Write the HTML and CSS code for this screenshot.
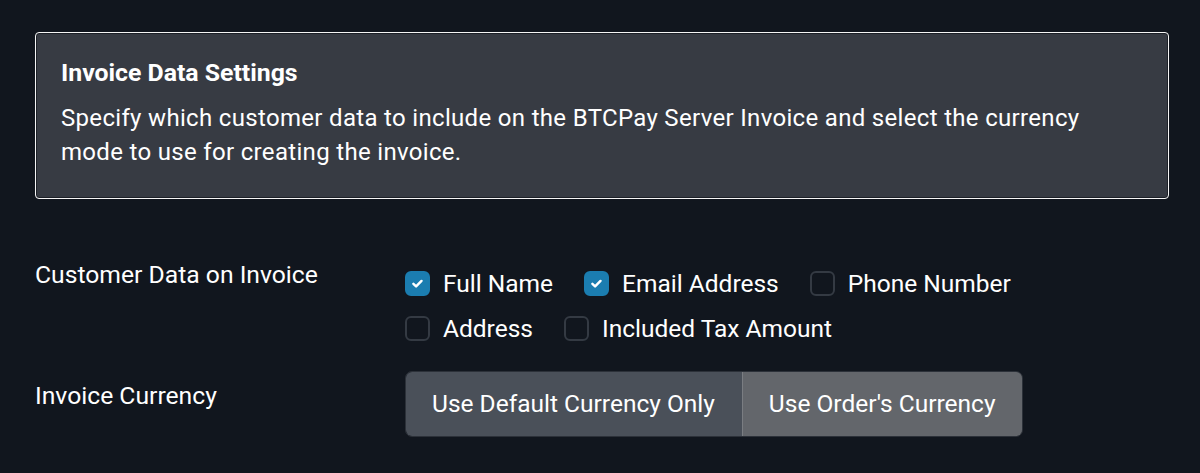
FILE: index.html
```html
<!DOCTYPE html>
<html>
<head>
<meta charset="utf-8">
<link rel="stylesheet" href="styles.css">
</head>
<body>
<div class="page">
  <div class="info-box">
    <div class="info-title">Invoice Data Settings</div>
    <div class="info-text">Specify which customer data to include on the BTCPay Server Invoice and select the currency mode to use for creating the invoice.</div>
  </div>

  <div class="form-row row-data">
    <div class="label">Customer Data on Invoice</div>
    <div class="checks">
      <label class="check"><span class="box checked"><svg viewBox="0 0 24 24" width="24" height="24"><path d="M7.3 12.4l3.1 3 6.2-6.3" fill="none" stroke="#fff" stroke-width="2.8" stroke-linecap="round" stroke-linejoin="round"/></svg></span>Full Name</label>
      <label class="check"><span class="box checked"><svg viewBox="0 0 24 24" width="24" height="24"><path d="M7.3 12.4l3.1 3 6.2-6.3" fill="none" stroke="#fff" stroke-width="2.8" stroke-linecap="round" stroke-linejoin="round"/></svg></span>Email Address</label>
      <label class="check"><span class="box"></span>Phone Number</label>
      <label class="check"><span class="box"></span>Address</label>
      <label class="check"><span class="box"></span>Included Tax Amount</label>
    </div>
  </div>

  <div class="form-row row-currency">
    <div class="label">Invoice Currency</div>
    <div class="btn-group">
      <span class="btn btn-default">Use Default Currency Only</span>
      <span class="btn btn-order">Use Order's Currency</span>
    </div>
  </div>
</div>
</body>
</html>
```

FILE: styles.css
```css
html, body {
  margin: 0;
  padding: 0;
  background: #11161e;
}
body {
  font-family: Roboto, "Noto Sans", "Liberation Sans", sans-serif;
  color: #ffffff;
}
.page {
  padding: 32px 31px 0 35px;
}
.info-box {
  border: 1px solid #f5f5f5;
  box-shadow: inset 0 0 0 1px #1c2027;
  border-radius: 4px;
  background: #373b43;
  padding: 23px 40px 29px 25px;
}
.info-title {
  font-weight: 700;
  font-size: 24.8px;
  line-height: 34px;
  margin-bottom: 11px;
}
.info-text {
  font-size: 24px;
  line-height: 34px;
  letter-spacing: 0.32px;
}
.form-row {
  display: grid;
  grid-template-columns: 370px 1fr;
}
.row-data {
  margin-top: 61px;
}
.row-currency {
  margin-top: 26px;
}
.label {
  font-size: 24.7px;
  line-height: 30px;
}
.row-currency .label {
  padding-top: 10px;
}
.checks {
  display: flex;
  flex-wrap: wrap;
  column-gap: 31px;
  row-gap: 12px;
  max-width: 640px;
  padding-top: 7px;
}
.check {
  display: flex;
  align-items: center;
  gap: 13px;
  font-size: 24.5px;
  line-height: 33px;
}
.box {
  width: 21px;
  height: 21px;
  border: 2px solid #343a43;
  border-radius: 6px;
  display: inline-flex;
  align-items: center;
  justify-content: center;
  box-sizing: content-box;
}
.box.checked {
  background: #1b7db0;
  border-color: #1b7db0;
}
.box svg {
  width: 21px;
  height: 21px;
}
.btn-group {
  display: flex;
  width: max-content;
  border-radius: 7px;
  overflow: hidden;
  border: 1px solid #2c3139;
}
.btn {
  font-size: 24.5px;
  line-height: 30px;
  padding: 17px 27px 17px 26px;
  color: #fff;
}
.btn-default {
  background: #4a5059;
}
.btn-order {
  background: #63666b;
  border: 1px solid #7a7d82;
  border-radius: 0 7px 7px 0;
  margin: -1px -1px -1px 0;
  padding-left: 26px;
  padding-right: 26px;
}
```
